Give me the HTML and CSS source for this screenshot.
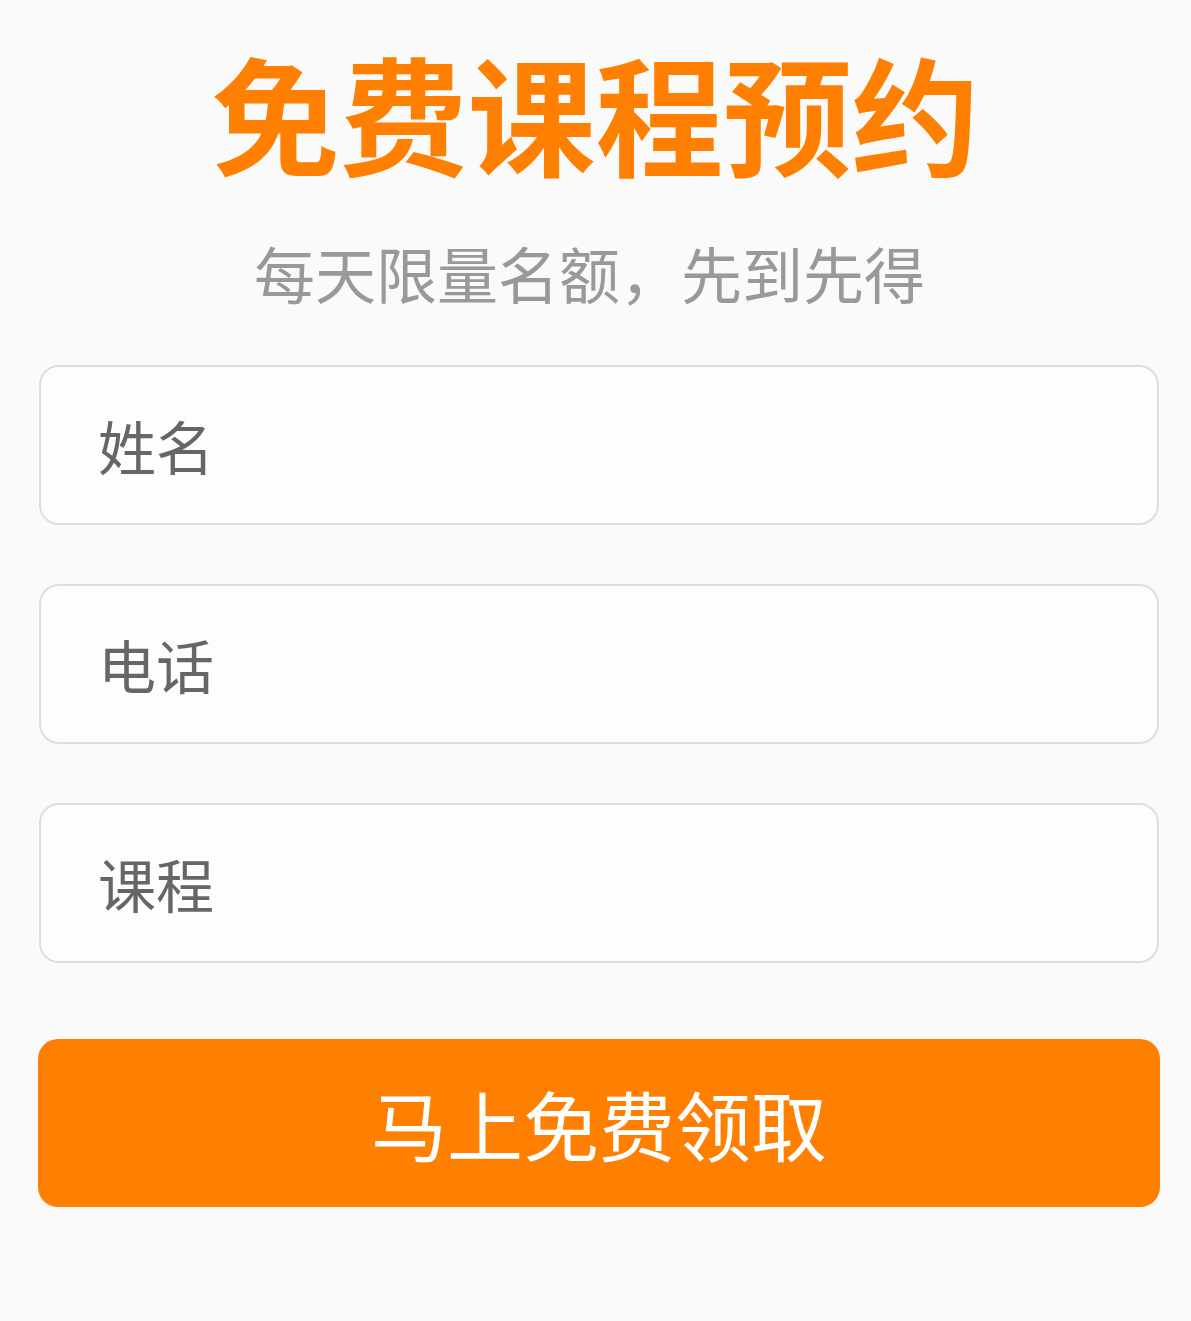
FILE: index.html
```html
<!DOCTYPE html>
<html lang="zh-CN">
<head>
    <meta charset="UTF-8">
    <meta name="viewport" content="width=device-width, initial-scale=1.0">
    <title>免费课程预约</title>
    <link rel="stylesheet" href="styles.css">
</head>
<body>
    <div class="container">
        <h1 class="title">免费课程预约</h1>
        <p class="subtitle">每天限量名额，先到先得</p>
        <form class="form">
            <input type="text" class="field" placeholder="姓名">
            <input type="tel" class="field" placeholder="电话">
            <input type="text" class="field" placeholder="课程">
            <button type="button" class="submit">马上免费领取</button>
        </form>
    </div>
</body>
</html>
```

FILE: styles.css
```css
* {
    margin: 0;
    padding: 0;
    box-sizing: border-box;
    font-family: "Noto Sans CJK SC", "Noto Sans", sans-serif;
}

body {
    background: #fafafa;
    min-height: 100vh;
}

.container {
    padding: 48px 31px 0 39px;
    text-align: center;
}

.title {
    color: #ff7f00;
    font-size: 128px;
    font-weight: 700;
    line-height: 1;
    padding-right: 8px;
}

.subtitle {
    color: #999;
    font-size: 61px;
    line-height: 1;
    margin-top: 66px;
    padding-right: 20px;
}

.form {
    display: flex;
    flex-direction: column;
    gap: 59px;
    margin-top: 62px;
}

.field {
    width: 1120px;
    height: 160px;
    border: 2px solid #dedede;
    border-radius: 20px;
    background: #fdfdfd;
    padding-left: 57px;
    font-size: 58px;
    color: #333;
    outline: none;
}

.field::placeholder {
    color: #666;
}

.submit {
    width: 1122px;
    height: 168px;
    margin: 17px 0 0 -1px;
    border: none;
    border-radius: 20px;
    background: #ff8000;
    color: #fff;
    font-size: 76px;
    cursor: pointer;
}
```
